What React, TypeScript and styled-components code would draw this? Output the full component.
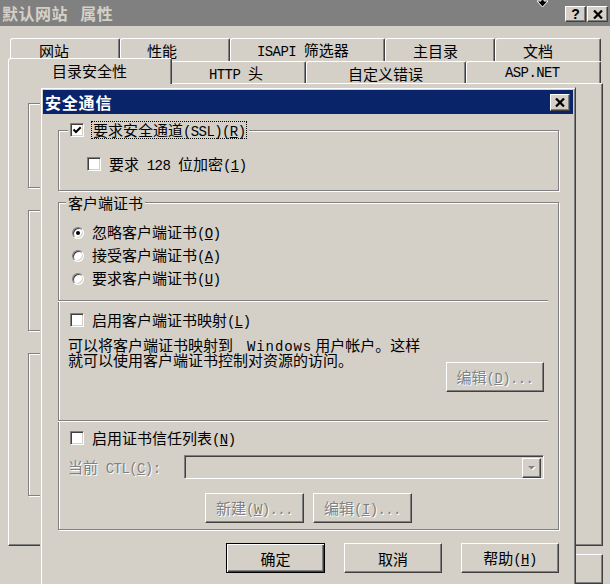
import React from "react";
import styled, { createGlobalStyle, css } from "styled-components";

const BG = "#d4d0c8";
const SHADOW = "#808080";
const DARK = "#404040";
const CJK = `"Noto Sans CJK SC", "Noto Sans", sans-serif`;

const GlobalStyle = createGlobalStyle`
  html, body { margin: 0; padding: 0; background: ${BG}; }
  body { font-family: ${CJK}; font-size: 15px; line-height: 1; color: #000; }
  *, *::before, *::after { box-sizing: border-box; }
`;

const raised = css`
  border: 1px solid;
  border-color: #fff ${DARK} ${DARK} #fff;
  box-shadow: inset -1px -1px 0 ${SHADOW};
`;
const sunken = css`
  border: 1px solid;
  border-color: ${SHADOW} #fff #fff ${SHADOW};
  box-shadow: inset 1px 1px 0 ${DARK}, inset -1px -1px 0 ${BG};
`;
const etched = css`
  border: 1px solid ${SHADOW};
  box-shadow: inset 1px 1px 0 #fff, 1px 1px 0 #fff;
`;

const Lat = styled.span`
  font-family: "Liberation Mono", "DejaVu Sans Mono", monospace;
  font-size: 14px;
  letter-spacing: -0.6px;
`;

const WideLat = styled(Lat)`
  letter-spacing: 0.9px;
  margin: 0 3px 0 14px;
`;

const Window = styled.div`
  position: relative;
  width: 610px;
  height: 584px;
  overflow: hidden;
  background: ${BG};
  display: flex;
  flex-direction: column;
`;

const TitleBar = styled.div`
  flex: none;
  height: 26px;
  background: #808080;
  display: flex;
  align-items: center;
  justify-content: space-between;
  padding: 0 2px 0 2px;
`;

const TitleText = styled.span`
  color: ${BG};
  font-weight: 700;
  font-size: 16px;
  letter-spacing: 0.5px;
  word-spacing: 8px;
  white-space: pre;
`;

const CapButtons = styled.div`
  display: flex;
  gap: 1px;
  margin-top: 2px;
`;

const CapBtn = styled.div`
  ${raised};
  width: 21px;
  height: 16px;
  background: ${BG};
  display: flex;
  align-items: center;
  justify-content: center;
  font-family: "Liberation Sans", Arial, sans-serif;
  font-weight: 700;
  font-size: 14px;
`;

const Pointer = styled.div`
  position: absolute;
  left: 536px;
  top: -3px;
  z-index: 20;
  line-height: 0;
`;

const TabStrip = styled.div`
  flex: none;
  margin-top: 12px;
  padding-left: 10px;
  display: flex;
  flex-direction: column;
`;

const TabRow = styled.div<{ $h: number }>`
  display: flex;
  height: ${(p) => p.$h}px;
`;

const Tab = styled.div<{ $w: number; $pl: number; $active?: boolean; $pt?: number }>`
  position: relative;
  flex: none;
  width: ${(p) => p.$w}px;
  height: 100%;
  background: ${BG};
  border-top: 1px solid #fff;
  border-left: 1px solid #fff;
  border-right: 1px solid ${DARK};
  border-radius: 3px 2px 0 0;
  box-shadow: inset -1px 0 0 ${SHADOW};
  padding-left: ${(p) => p.$pl}px;
  padding-top: ${(p) => p.$pt ?? 0}px;
  display: flex;
  align-items: center;
  white-space: pre;
  font-size: 15px;
  ${(p) =>
    p.$active &&
    css`
      z-index: 2;
      width: ${p.$w + 4}px;
      height: calc(100% + 4px);
      margin: -3px -2px 0 -2px;
      padding-left: ${p.$pl + 2}px;
      padding-top: 0;
      padding-bottom: 2px;
    `}
`;

const Panel = styled.div`
  flex: none;
  margin-left: 8px;
  width: 595px;
  height: 463px;
  border: 1px solid;
  border-color: #fff ${DARK} ${DARK} #fff;
  box-shadow: inset -1px -1px 0 ${SHADOW};
  padding: 19px 0 0 19px;
  display: flex;
  flex-direction: column;
  gap: 22px;
`;

const GhostGroup = styled.div<{ $h: number }>`
  ${etched};
  flex: none;
  width: 540px;
  height: ${(p) => p.$h}px;
`;

const OuterButtons = styled.div`
  flex: none;
  margin-top: 8px;
  padding-right: 7px;
  display: flex;
  justify-content: flex-end;
  gap: 18px;
`;

const Button = styled.div<{ $w: number; $default?: boolean; $disabled?: boolean; $mt?: number }>`
  ${raised};
  flex: none;
  width: ${(p) => p.$w}px;
  height: 30px;
  margin-top: ${(p) => p.$mt ?? 0}px;
  background: ${BG};
  display: flex;
  align-items: center;
  justify-content: center;
  white-space: pre;
  font-size: 15px;
  ${(p) =>
    p.$default &&
    css`
      border: 1px solid #000;
      box-shadow: inset 1px 1px 0 #fff, inset -1px -1px 0 ${DARK}, inset -2px -2px 0 ${SHADOW};
    `}
  ${(p) =>
    p.$disabled &&
    css`
      color: ${SHADOW};
      text-shadow: 1px 1px 0 #fff;
    `}
`;

const Dialog = styled.div`
  position: absolute;
  left: 40px;
  top: 87px;
  width: 536px;
  height: 520px;
  z-index: 10;
  background: ${BG};
  border: 1px solid;
  border-color: ${BG} ${DARK} ${DARK} ${BG};
  box-shadow: inset 1px 1px 0 #fff, inset -1px -1px 0 ${SHADOW};
  padding: 2px;
  display: flex;
  flex-direction: column;
`;

const DlgTitle = styled.div`
  flex: none;
  height: 24px;
  background: #0a246a;
  color: #fff;
  font-weight: 700;
  font-size: 16px;
  letter-spacing: 0.8px;
  display: flex;
  align-items: center;
  justify-content: space-between;
  padding: 0 3px 0 2px;
`;

const CloseBtn = styled.div`
  ${raised};
  width: 20px;
  height: 17px;
  background: ${BG};
  display: flex;
  align-items: center;
  justify-content: center;
`;

const DlgBody = styled.div`
  flex: none;
  padding: 0 14px 0 15px;
  display: flex;
  flex-direction: column;
`;

const Group = styled.div<{ $h: number; $mt: number }>`
  ${etched};
  position: relative;
  flex: none;
  height: ${(p) => p.$h}px;
  margin-top: ${(p) => p.$mt}px;
  display: flex;
  flex-direction: column;
`;

const Legend = styled.div<{ $left: number }>`
  position: absolute;
  top: -10px;
  left: ${(p) => p.$left}px;
  height: 18px;
  padding: 0 2px;
  background: ${BG};
  display: flex;
  align-items: center;
  gap: 7px;
  white-space: pre;
`;

const FocusLabel = styled.span`
  height: 18px;
  padding: 0 1px;
  border: 1px dotted #000;
  display: flex;
  align-items: center;
  white-space: pre;
`;

const Section = styled.div<{ $pt: number; $pl: number }>`
  flex: none;
  padding-top: ${(p) => p.$pt}px;
  padding-left: ${(p) => p.$pl}px;
  display: flex;
  flex-direction: column;
`;

const OptionRow = styled.div<{ $h: number }>`
  display: flex;
  align-items: center;
  gap: 8px;
  height: ${(p) => p.$h}px;
  white-space: pre;
`;

const Box = styled.span`
  ${sunken};
  flex: none;
  width: 14px;
  height: 14px;
  background: #fff;
  display: inline-flex;
  align-items: center;
  justify-content: center;
`;

const RadioDot = styled.span<{ $on?: boolean }>`
  flex: none;
  width: 12px;
  height: 12px;
  border-radius: 50%;
  background: #fff;
  border: 1px solid;
  border-color: ${SHADOW} #fff #fff ${SHADOW};
  box-shadow: inset 1px 1px 0 ${DARK}, inset -1px -1px 0 ${BG};
  display: inline-flex;
  align-items: center;
  justify-content: center;
  &::after {
    content: "";
    width: 4px;
    height: 4px;
    border-radius: 50%;
    background: #000;
    display: ${(p) => (p.$on ? "block" : "none")};
  }
`;

const Separator = styled.div<{ $mt: number }>`
  flex: none;
  height: 2px;
  margin: ${(p) => p.$mt}px 10px 0 -1px;
  border-top: 1px solid ${SHADOW};
  border-bottom: 1px solid #fff;
`;

const DescRow = styled.div`
  flex: none;
  margin-top: 9px;
  padding: 0 14px 0 9px;
  display: flex;
  justify-content: space-between;
  align-items: flex-start;
`;

const Desc = styled.div`
  display: flex;
  flex-direction: column;
`;

const DescLine = styled.div`
  height: 15px;
  line-height: 15px;
  white-space: pre;
`;

const CtlRow = styled.div`
  flex: none;
  margin-top: 9px;
  padding-left: 9px;
  display: flex;
  align-items: center;
`;

const Dim = styled.span`
  color: ${SHADOW};
  text-shadow: 1px 1px 0 #fff;
`;

const CtlLabel = styled(Dim)`
  width: 116px;
  white-space: pre;
`;

const Combo = styled.div`
  ${sunken};
  width: 360px;
  height: 24px;
  background: ${BG};
  padding: 2px;
  display: flex;
  justify-content: flex-end;
`;

const ComboBtn = styled.div`
  ${raised};
  width: 19px;
  height: 20px;
  background: ${BG};
  display: flex;
  align-items: center;
  justify-content: center;
`;

const BtnRow = styled.div<{ $mt: number; $pl?: number; $end?: boolean; $gap: number }>`
  flex: none;
  margin-top: ${(p) => p.$mt}px;
  padding-left: ${(p) => p.$pl ?? 0}px;
  display: flex;
  justify-content: ${(p) => (p.$end ? "flex-end" : "flex-start")};
  gap: ${(p) => p.$gap}px;
`;

function XGlyph() {
  return (
    <svg width="10" height="9" viewBox="0 0 10 9">
      <path d="M1 0.5 L9 8.5 M9 0.5 L1 8.5" stroke="#000" strokeWidth="2.2" fill="none" />
    </svg>
  );
}

function Check({ checked }: { checked?: boolean }) {
  return (
    <Box>
      {checked && (
        <svg width="10" height="10" viewBox="0 0 10 10">
          <path d="M1.5 4.5 L4 7 L8.7 2.2" fill="none" stroke="#000" strokeWidth="2" />
        </svg>
      )}
    </Box>
  );
}

function DisabledArrow() {
  return (
    <svg width="9" height="6" viewBox="0 0 9 6">
      <path d="M2 2 L9 2 L5.5 5.5 Z" fill="#fff" />
      <path d="M1 1 L8 1 L4.5 4.5 Z" fill={SHADOW} />
    </svg>
  );
}

export default function App() {
  return (
    <>
      <GlobalStyle />
      <Window>
        <TitleBar>
          <TitleText>默认网站 属性</TitleText>
          <CapButtons>
            <CapBtn>?</CapBtn>
            <CapBtn>
              <XGlyph />
            </CapBtn>
          </CapButtons>
        </TitleBar>
        <Pointer>
          <svg width="13" height="11" viewBox="0 0 13 11">
            <path d="M5 0 L8 0 L8 4 L12 4 L6.5 10 L1 4 L5 4 Z" fill="#000" stroke="#fff" strokeWidth="1" />
          </svg>
        </Pointer>
        <TabStrip>
          <TabRow $h={23}>
            <Tab $w={110} $pl={28}>网站</Tab>
            <Tab $w={110} $pl={26}>性能</Tab>
            <Tab $w={155} $pl={26}>
              <span>
                <Lat>ISAPI </Lat>筛选器
              </span>
            </Tab>
            <Tab $w={110} $pl={27}>主目录</Tab>
            <Tab $w={106} $pl={27}>文档</Tab>
          </TabRow>
          <TabRow $h={22}>
            <Tab $w={160} $pl={41} $active>
              目录安全性
            </Tab>
            <Tab $w={136} $pl={38} $pt={1}>
              <span>
                <Lat>HTTP </Lat>头
              </span>
            </Tab>
            <Tab $w={160} $pl={41} $pt={1}>
              自定义错误
            </Tab>
            <Tab $w={135} $pl={38} $pt={1}>
              <Lat>ASP.NET</Lat>
            </Tab>
          </TabRow>
        </TabStrip>
        <Panel>
          <GhostGroup $h={85} />
          <GhostGroup $h={121} />
          <GhostGroup $h={143} />
        </Panel>
        <OuterButtons>
          <Button $w={98}>确定</Button>
          <Button $w={98}>取消</Button>
          <Button $w={98}>应用</Button>
          <Button $w={98}>帮助</Button>
        </OuterButtons>

        <Dialog>
          <DlgTitle>
            <span>安全通信</span>
            <CloseBtn>
              <XGlyph />
            </CloseBtn>
          </DlgTitle>
          <DlgBody>
            <Group $h={61} $mt={16}>
              <Legend $left={9}>
                <Check checked />
                <FocusLabel>
                  <span>
                    要求安全通道<Lat>(SSL)(<u>R</u>)</Lat>
                  </span>
                </FocusLabel>
              </Legend>
              <Section $pt={25} $pl={28}>
                <OptionRow $h={16}>
                  <Check />
                  <span>
                    要求<Lat> 128 </Lat>位加密<Lat>(<u>1</u>)</Lat>
                  </span>
                </OptionRow>
              </Section>
            </Group>

            <Group $h={328} $mt={11}>
              <Legend $left={7}>客户端证书</Legend>
              <Section $pt={18} $pl={13}>
                <OptionRow $h={23}>
                  <RadioDot $on />
                  <span>
                    忽略客户端证书<Lat>(<u>O</u>)</Lat>
                  </span>
                </OptionRow>
                <OptionRow $h={23}>
                  <RadioDot />
                  <span>
                    接受客户端证书<Lat>(<u>A</u>)</Lat>
                  </span>
                </OptionRow>
                <OptionRow $h={23}>
                  <RadioDot />
                  <span>
                    要求客户端证书<Lat>(<u>U</u>)</Lat>
                  </span>
                </OptionRow>
              </Section>
              <Separator $mt={10} />
              <Section $pt={10} $pl={11}>
                <OptionRow $h={16}>
                  <Check />
                  <span>
                    启用客户端证书映射<Lat>(<u>L</u>)</Lat>
                  </span>
                </OptionRow>
              </Section>
              <DescRow>
                <Desc>
                  <DescLine>
                    可以将客户端证书映射到<WideLat>Windows</WideLat>用户帐户。这样
                  </DescLine>
                  <DescLine>就可以使用客户端证书控制对资源的访问。</DescLine>
                </Desc>
                <Button $w={98} $mt={25} $disabled>
                  <span>
                    编辑<Lat>(<u>D</u>)...</Lat>
                  </span>
                </Button>
              </DescRow>
              <Separator $mt={28} />
              <Section $pt={8} $pl={11}>
                <OptionRow $h={16}>
                  <Check />
                  <span>
                    启用证书信任列表<Lat>(<u>N</u>)</Lat>
                  </span>
                </OptionRow>
              </Section>
              <CtlRow>
                <CtlLabel>
                  当前<Lat> CTL(<u>C</u>):</Lat>
                </CtlLabel>
                <Combo>
                  <ComboBtn>
                    <DisabledArrow />
                  </ComboBtn>
                </Combo>
              </CtlRow>
              <BtnRow $mt={14} $pl={146} $gap={9}>
                <Button $w={99} $disabled>
                  <span>
                    新建<Lat>(<u>W</u>)...</Lat>
                  </span>
                </Button>
                <Button $w={99} $disabled>
                  <span>
                    编辑<Lat>(<u>I</u>)...</Lat>
                  </span>
                </Button>
              </BtnRow>
            </Group>

            <BtnRow $mt={13} $end $gap={19}>
              <Button $w={99} $default>
                确定
              </Button>
              <Button $w={98}>取消</Button>
              <Button $w={98}>
                <span>
                  帮助<Lat>(<u>H</u>)</Lat>
                </span>
              </Button>
            </BtnRow>
          </DlgBody>
        </Dialog>
      </Window>
    </>
  );
}
